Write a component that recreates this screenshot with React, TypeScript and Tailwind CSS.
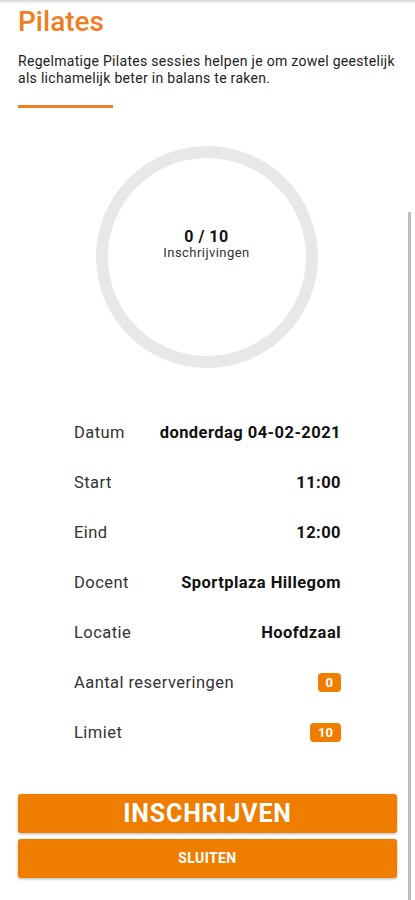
import React from "react";

const rows: { label: string; value: string; badge?: boolean }[] = [
  { label: "Datum", value: "donderdag 04-02-2021" },
  { label: "Start", value: "11:00" },
  { label: "Eind", value: "12:00" },
  { label: "Docent", value: "Sportplaza Hillegom" },
  { label: "Locatie", value: "Hoofdzaal" },
  { label: "Aantal reserveringen", value: "0", badge: true },
  { label: "Limiet", value: "10", badge: true },
];

export default function App() {
  return (
    <div
      className="relative w-[415px] h-[900px] overflow-hidden bg-white"
      style={{ fontFamily: "Roboto, 'Liberation Sans', sans-serif" }}
    >
      {/* top shadow */}
      <div className="h-[4px] bg-gradient-to-b from-[#d6d6d6] to-white" />

      <div className="px-[18px]">
        <h1 className="text-[28px] leading-[34px] font-medium text-[#ef7d22] mt-[1px]">Pilates</h1>
        <p className="mt-[14px] text-[14px] leading-[17px] tracking-[0.3px] text-[#222]">
          Regelmatige Pilates sessies helpen je om zowel geestelijk als lichamelijk beter in balans te raken.
        </p>
        <div className="mt-[18px] w-[95px] h-[3px] bg-[#ef7d22]" />
      </div>

      {/* progress circle */}
      <div className="flex justify-center mt-[38px] pr-[2px]">
        <div className="w-[222px] h-[222px] rounded-full border-[12px] border-[#e8e8e8] flex flex-col items-center pt-[69px]">
          <div className="text-[16px] leading-[19px] font-bold tracking-[0.5px] text-[#111]">0 / 10</div>
          <div className="text-[13px] leading-[14px] tracking-[0.45px] text-[#333]">Inschrijvingen</div>
        </div>
      </div>

      {/* details */}
      <div className="mt-[54px] pl-[74px] pr-[74px] flex flex-col">
        {rows.map((r) => (
          <div key={r.label} className="h-[50px] flex items-start justify-between text-[16.5px] leading-[22px] tracking-[0.45px]">
            <span className="text-[#333]">{r.label}</span>
            {r.badge ? (
              <span className="mt-[1px] px-[8px] h-[19px] rounded-[4px] bg-[#ef7d00] text-white text-[13px] leading-[19px] font-bold tracking-normal">
                {r.value}
              </span>
            ) : (
              <span className="font-bold text-[#111]">{r.value}</span>
            )}
          </div>
        ))}
      </div>

      {/* buttons */}
      <div className="px-[18px] mt-[22px] flex flex-col gap-[6px]">
        <button className="h-[39px] w-full rounded-[3px] bg-[#ef7d00] text-white text-[25px] font-bold tracking-[0.8px] shadow-[0_1px_3px_rgba(0,0,0,0.3)]">
          INSCHRIJVEN
        </button>
        <button className="h-[39px] w-full rounded-[3px] bg-[#ef7d00] text-white text-[14px] font-bold tracking-[0.4px] shadow-[0_1px_3px_rgba(0,0,0,0.3)]">
          SLUITEN
        </button>
      </div>

      {/* scrollbar */}
      <div className="absolute left-[408px] top-[212px] w-[3px] h-[688px] bg-[#bdbdbd]" />
    </div>
  );
}
